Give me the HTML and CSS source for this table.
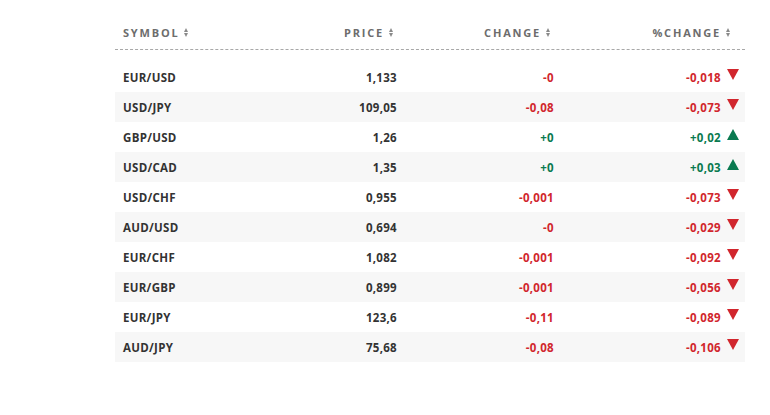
FILE: index.html
```html
<!DOCTYPE html>
<html>
<head>
<meta charset="utf-8">
<link rel="stylesheet" href="styles.css">
</head>
<body>
<div class="quotes">
  <div class="head row">
    <div class="cell sym">SYMBOL<span class="sort"><i class="up"></i><i class="dn"></i></span></div>
    <div class="cell num">PRICE<span class="sort"><i class="up"></i><i class="dn"></i></span></div>
    <div class="cell num">CHANGE<span class="sort"><i class="up"></i><i class="dn"></i></span></div>
    <div class="cell num pcth">%CHANGE<span class="sort"><i class="up"></i><i class="dn"></i></span></div>
  </div>
  <div class="body">
    <div class="row"><div class="cell sym">EUR/USD</div><div class="cell num">1,133</div><div class="cell num neg">-0</div><div class="cell num pct neg">-0,018<span class="tri down"></span></div></div>
    <div class="row alt"><div class="cell sym">USD/JPY</div><div class="cell num">109,05</div><div class="cell num neg">-0,08</div><div class="cell num pct neg">-0,073<span class="tri down"></span></div></div>
    <div class="row"><div class="cell sym">GBP/USD</div><div class="cell num">1,26</div><div class="cell num pos">+0</div><div class="cell num pct pos">+0,02<span class="tri up"></span></div></div>
    <div class="row alt"><div class="cell sym">USD/CAD</div><div class="cell num">1,35</div><div class="cell num pos">+0</div><div class="cell num pct pos">+0,03<span class="tri up"></span></div></div>
    <div class="row"><div class="cell sym">USD/CHF</div><div class="cell num">0,955</div><div class="cell num neg">-0,001</div><div class="cell num pct neg">-0,073<span class="tri down"></span></div></div>
    <div class="row alt"><div class="cell sym">AUD/USD</div><div class="cell num">0,694</div><div class="cell num neg">-0</div><div class="cell num pct neg">-0,029<span class="tri down"></span></div></div>
    <div class="row"><div class="cell sym">EUR/CHF</div><div class="cell num">1,082</div><div class="cell num neg">-0,001</div><div class="cell num pct neg">-0,092<span class="tri down"></span></div></div>
    <div class="row alt"><div class="cell sym">EUR/GBP</div><div class="cell num">0,899</div><div class="cell num neg">-0,001</div><div class="cell num pct neg">-0,056<span class="tri down"></span></div></div>
    <div class="row"><div class="cell sym">EUR/JPY</div><div class="cell num">123,6</div><div class="cell num neg">-0,11</div><div class="cell num pct neg">-0,089<span class="tri down"></span></div></div>
    <div class="row alt"><div class="cell sym">AUD/JPY</div><div class="cell num">75,68</div><div class="cell num neg">-0,08</div><div class="cell num pct neg">-0,106<span class="tri down"></span></div></div>
  </div>
</div>
</body>
</html>
```

FILE: styles.css
```css
html, body {
  margin: 0;
  padding: 0;
  background: #fff;
}
body {
  font-family: "Open Sans", "Liberation Sans", sans-serif;
  font-weight: 700;
  font-size: 11.5px;
  letter-spacing: 0.3px;
  color: #333;
}
.quotes {
  width: 630px;
  margin: 16px 0 0 115px;
}
.row {
  display: grid;
  grid-template-columns: 124px 150px 157px 185px;
  padding: 0 6px 0 8px;
  height: 30px;
  align-items: center;
}
.row.alt {
  background: #f7f7f7;
}
.head {
  height: 33px;
  border-bottom: 1px dashed #a8a8a8;
  color: #6d6d6d;
  letter-spacing: 1.8px;
  font-size: 11px;
}
.head .cell {
  display: flex;
  align-items: center;
}
.head .num {
  justify-content: flex-end;
  padding-right: 4px;
}
.head .pcth {
  padding-right: 9px;
}
.body {
  margin-top: 12px;
}
.cell.num {
  text-align: right;
}
.neg { color: #d1262d; }
.pos { color: #0a7a50; }
.pct {
  display: flex;
  justify-content: flex-end;
  align-items: center;
}
.sort {
  display: inline-flex;
  flex-direction: column;
  gap: 1px;
  margin-left: 5px;
  margin-top: -1px;
}
.sort i {
  display: block;
  width: 0;
  height: 0;
  border-left: 2.5px solid transparent;
  border-right: 2.5px solid transparent;
}
.sort .up { border-bottom: 4px solid #8a8a8a; }
.sort .dn { border-top: 4px solid #8a8a8a; }
.tri {
  display: inline-block;
  width: 0;
  height: 0;
  margin-left: 6px;
  border-left: 6.5px solid transparent;
  border-right: 6.5px solid transparent;
  position: relative;
  top: -3px;
}
.tri.down { border-top: 11px solid #d1262d; }
.tri.up { border-bottom: 11px solid #0a7a50; }
```
